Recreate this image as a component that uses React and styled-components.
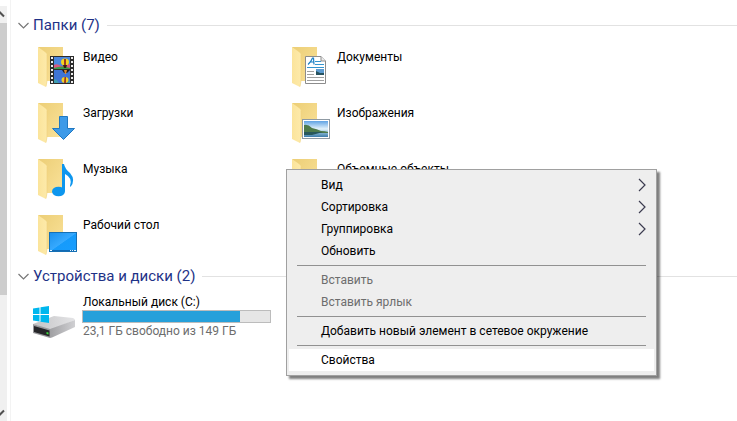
import { useState } from 'react';
import styled, { createGlobalStyle, css } from 'styled-components';

const GlobalStyle = createGlobalStyle`
  *, *::before, *::after {
    box-sizing: border-box;
  }

  body {
    margin: 0;
    background: #fff;
    color: #000;
    font-family: Roboto, "Noto Sans", sans-serif;
    font-size: 12px;
    line-height: 16px;
  }

  button {
    font: inherit;
    color: inherit;
    border: none;
    background: none;
    padding: 0;
  }
`;

const Page = styled.div`
  position: relative;
  display: flex;
  min-height: 100vh;
  overflow: hidden;
`;

const Scrollbar = styled.div`
  flex-shrink: 0;
  display: flex;
  flex-direction: column;
  width: 7px;
  margin-top: 6px;
  background: #f0f0f0;
`;

const ScrollButton = styled.button`
  display: flex;
  justify-content: flex-end;
  align-items: center;
  height: 17px;
  overflow: hidden;
`;

const Thumb = styled.div`
  flex: 5;
  background: #cdcdcd;
`;

const Track = styled.div`
  flex: 2;
`;

const Main = styled.main`
  flex: 1;
  min-width: 0;
  margin-left: 3px;
  padding: 12px 0 0 7px;
  border-left: 1px solid #f3f3f3;
`;

const GroupHeader = styled.div`
  display: flex;
  align-items: center;
  height: 27px;
`;

const GroupToggle = styled.button`
  display: flex;
  align-items: center;
  gap: 4px;
  color: #1e3287;
`;

const GroupTitle = styled.h2`
  margin: 0;
  font-size: 15px;
  line-height: 19px;
  font-weight: 400;
`;

const GroupLine = styled.div`
  flex: 1;
  height: 1px;
  margin-left: 7px;
  background: #e2e2e2;
`;

const FolderGrid = styled.div`
  display: grid;
  grid-template-columns: repeat(auto-fill, 254px);
  grid-auto-rows: 56px;
  max-width: 600px;
  padding-left: 14px;
`;

const Tile = styled.div`
  display: flex;
  align-items: flex-start;
  gap: 2px;
  padding: 4px 0;
`;

const TileIcon = styled.svg`
  flex-shrink: 0;
  width: 48px;
  height: 48px;
`;

const TileName = styled.div`
  padding: 6px 1px 0;
`;

const DriveInfo = styled.div`
  width: 189px;
`;

const DriveText = styled.div`
  padding-left: 1px;
  white-space: nowrap;
  color: ${(props) => (props.$muted ? '#6d6d6d' : '#000')};
`;

const Capacity = styled.div`
  height: 13px;
  border: 1px solid #bcbcbc;
  background: #e6e6e6;
`;

const CapacityUsed = styled.div`
  height: 100%;
  background: #26a0da;
`;

const Menu = styled.div`
  position: absolute;
  top: 169px;
  left: 286px;
  width: 371px;
  padding: 4px 2px;
  border: 1px solid #a0a0a0;
  background: #eee;
  box-shadow: 3px 3px 2px rgba(0, 0, 0, 0.5);
`;

const MenuItem = styled.button`
  display: flex;
  justify-content: space-between;
  align-items: center;
  width: 100%;
  height: 22px;
  padding: 0 8px 0 32px;
  text-align: left;

  ${(props) =>
    props.$active &&
    css`
      background: #fff;
    `}

  &:disabled {
    color: #6d6d6d;
  }
`;

const Separator = styled.hr`
  height: 1px;
  margin: 3px 8px;
  border: none;
  background: #919191;
`;

function FolderBase() {
  return (
    <>
      <defs>
        <linearGradient id="folderBack" x1="0" y1="0" x2="1" y2="1">
          <stop offset="0" stopColor="#ecce76" />
          <stop offset="1" stopColor="#fae29a" />
        </linearGradient>
        <linearGradient id="folderFlap" x1="0" y1="0" x2="1" y2="0">
          <stop offset="0" stopColor="#fbe49b" />
          <stop offset="1" stopColor="#fdeaaa" />
        </linearGradient>
      </defs>
      <path d="M6 4H31V38H14Z" fill="url(#folderBack)" />
      <path d="M14 38H19V40L14 44Z" fill="#fff" />
      <path d="M6 4L13 9Q15 10 15 13V38L14 44L6 40Z" fill="url(#folderFlap)" />
      <path d="M15 12V38L14 43.5" fill="none" stroke="#f0d27c" strokeWidth="0.6" />
    </>
  );
}

const overlays = {
  video: (
    <>
      <rect x="18" y="13" width="24" height="28" fill="#2c2c2c" />
      <rect x="22" y="14" width="16" height="12" fill="#4a86dd" />
      <path d="M22 22Q25 20 29 23L38 21V26H22Z" fill="#d8567f" />
      <path d="M22 25Q30 22 38 25V26H22Z" fill="#3a9b4c" />
      <ellipse cx="33" cy="19" rx="4" ry="3.500" fill="#f6d21c" />
      <path d="M32 16H34V22H32Z" fill="#9a3b23" />
      <path d="M31 22H35L34 25H32Z" fill="#33210f" />
      <rect x="22" y="27" width="16" height="13" fill="#3f74d6" />
      <path d="M30 27H38L35 30H32Z" fill="#231a1c" />
      <path d="M32 27H35L34 31H33Z" fill="#dc8a2e" />
      <ellipse cx="33" cy="37" rx="3.500" ry="3" fill="#f4cf24" />
      <path d="M32.500 34H34V40H32Z" fill="#9a3b23" />
      <path d="M22 36Q25 36 27 40H22ZM35 40Q37 37 38 38V40Z" fill="#3f9db0" />
      {[14, 18, 22, 26, 30, 34, 38].map((y) => (
        <g key={y} fill="#eee">
          <rect x="19" y={y} width="2" height="2" />
          <rect x="39" y={y} width="2" height="2" />
        </g>
      ))}
    </>
  ),
  documents: (
    <>
      <path d="M19.500 13.500H35L39.500 18V40.500H19.500Z" fill="#fff" stroke="#8c8c8c" />
      <path d="M35 13.500V18H39.500" fill="#ececec" stroke="#8c8c8c" />
      <path
        d="M22 21.500Q25 19 26.500 15H27.500L28 21.500M24.500 19H28"
        fill="none"
        stroke="#1c80c5"
        strokeWidth="1.200"
      />
      <path d="M29 18.500H35M29 21.500H38M21 24.500H38" stroke="#3595cf" />
      <path d="M21 28.500H28M21 31.500H28M21 34.500H38M21 37.500H38" stroke="#a0a0a0" />
      <rect x="30" y="26" width="8" height="6" fill="#5d9bd0" />
      <path d="M30 28L34 30H38V32H30Z" fill="#27535f" />
    </>
  ),
  downloads: (
    <path
      d="M27.500 17.500H35.500V29.500H42.500L31.500 40.500L20.500 29.500H27.500Z"
      fill="#3d9ae8"
      stroke="#1f78c2"
    />
  ),
  images: (
    <>
      <defs>
        <linearGradient id="photoSky" x1="0" y1="0" x2="0" y2="1">
          <stop offset="0" stopColor="#5fa3e4" />
          <stop offset="0.500" stopColor="#e4f3fb" />
          <stop offset="0.700" stopColor="#8fbdd9" />
          <stop offset="1" stopColor="#3c7ba8" />
        </linearGradient>
      </defs>
      <rect x="16.500" y="20.500" width="27" height="19" fill="#fff" stroke="#8f9aa3" />
      <rect x="18" y="22" width="24" height="16" fill="url(#photoSky)" />
      <path d="M18 26Q22 25 26 29Q31 30 35 32Q39 32 42 33V34H18Z" fill="#4d7a4b" />
      <path d="M18 33H37Q30 35 26 36H18Z" fill="#28585b" />
    </>
  ),
  music: (
    <>
      <ellipse cx="26.500" cy="36.500" rx="6.500" ry="4.800" fill="#0d96ee" />
      <path
        d="M30 9H32Q33 14 38 18Q44 25 38.500 32L38 31Q41 23 33 19V36H30Z"
        fill="#0d96ee"
      />
    </>
  ),
  desktop: (
    <>
      <defs>
        <linearGradient id="screen" x1="0" y1="0" x2="1" y2="1">
          <stop offset="0" stopColor="#1a8fea" />
          <stop offset="0.500" stopColor="#37aaff" />
          <stop offset="0.520" stopColor="#169bfb" />
          <stop offset="1" stopColor="#179dff" />
        </linearGradient>
      </defs>
      <rect x="17.500" y="21.500" width="27" height="19" fill="url(#screen)" stroke="#1570b5" />
      <path d="M18 39.500H44" stroke="#126ab4" />
      <path d="M18 39.500H20M38 39.500H39M40 39.500H41M42 39.500H44" stroke="#e5f5ff" />
    </>
  ),
};

function FolderIcon({ type }) {
  return (
    <TileIcon viewBox="0 0 48 48" aria-hidden="true">
      <FolderBase />
      {overlays[type]}
    </TileIcon>
  );
}

function DriveIcon() {
  return (
    <TileIcon viewBox="0 0 48 48" aria-hidden="true">
      <defs>
        <linearGradient id="driveTop" x1="0" y1="0" x2="1" y2="0">
          <stop offset="0" stopColor="#c4c4c6" />
          <stop offset="1" stopColor="#e4e4e6" />
        </linearGradient>
        <linearGradient id="driveSide" x1="0" y1="0" x2="1" y2="0">
          <stop offset="0" stopColor="#a0a0a3" />
          <stop offset="1" stopColor="#d0d0d3" />
        </linearGradient>
      </defs>
      <path d="M1 30L22 22L41 24Q43 25 43 26L18 36Z" fill="url(#driveTop)" />
      <path d="M43 26V33L20 43.500L18 44V35Z" fill="url(#driveSide)" />
      <path d="M1 30L18 35V44L1 39Z" fill="#98989b" />
      <path d="M2 32L17.500 36.500V42.500L2 38Z" fill="#262629" />
      <path d="M14.500 38L16.500 38.500V40.500L14.500 40Z" fill="#3ddc3d" />
      <path
        d="M1 14.500L7.500 13.500V20H1ZM8.500 13.300L17 12V20H8.500ZM1 21H7.500V27.500L1 26.500ZM8.500 21H17V29L8.500 27.700Z"
        fill="#00b7ee"
      />
    </TileIcon>
  );
}

const folders = [
  { name: 'Видео', type: 'video' },
  { name: 'Документы', type: 'documents' },
  { name: 'Загрузки', type: 'downloads' },
  { name: 'Изображения', type: 'images' },
  { name: 'Музыка', type: 'music' },
  { name: 'Объемные объекты', type: 'objects' },
  { name: 'Рабочий стол', type: 'desktop' },
];

const menuGroups = [
  [
    { label: 'Вид', submenu: true },
    { label: 'Сортировка', submenu: true },
    { label: 'Группировка', submenu: true },
    { label: 'Обновить' },
  ],
  [
    { label: 'Вставить', disabled: true },
    { label: 'Вставить ярлык', disabled: true },
  ],
  [{ label: 'Добавить новый элемент в сетевое окружение' }],
  [{ label: 'Свойства', active: true }],
];

function Group({ title, children }) {
  const [open, setOpen] = useState(true);

  return (
    <section>
      <GroupHeader>
        <GroupToggle aria-expanded={open} onClick={() => setOpen(!open)}>
          <svg width="11" height="8" viewBox="0 0 11 8" aria-hidden="true">
            <path d="M0.500 1L5.500 6L10.500 1" fill="none" stroke="#777" strokeWidth="1.200" />
          </svg>
          <GroupTitle>{title}</GroupTitle>
        </GroupToggle>
        <GroupLine />
      </GroupHeader>
      {open && children}
    </section>
  );
}

function ContextMenu() {
  return (
    <Menu role="menu">
      {menuGroups.map((items, index) => (
        <div key={items[0].label}>
          {index > 0 && <Separator />}
          {items.map((item) => (
            <MenuItem
              key={item.label}
              role="menuitem"
              disabled={item.disabled}
              $active={item.active}
            >
              {item.label}
              {item.submenu && (
                <svg width="8" height="14" viewBox="0 0 8 14" aria-hidden="true">
                  <path d="M1 1L7 7L1 13" fill="none" stroke="#3c3c50" strokeWidth="1.200" />
                </svg>
              )}
            </MenuItem>
          ))}
        </div>
      ))}
    </Menu>
  );
}

function App() {
  const used = 84;

  return (
    <>
      <GlobalStyle />
      <Page>
        <Scrollbar>
          <ScrollButton aria-label="Вверх">
            <svg width="7" height="7" viewBox="0 0 7 7">
              <path d="M-4 5.500L0 1.500L4 5.500" fill="none" stroke="#505050" strokeWidth="2" />
            </svg>
          </ScrollButton>
          <Thumb />
          <Track />
          <ScrollButton aria-label="Вниз">
            <svg width="7" height="7" viewBox="0 0 7 7">
              <path d="M-4 1.500L0 5.500L4 1.500" fill="none" stroke="#505050" strokeWidth="2" />
            </svg>
          </ScrollButton>
        </Scrollbar>
        <Main>
          <Group title="Папки (7)">
            <FolderGrid>
              {folders.map((folder) => (
                <Tile key={folder.name}>
                  <FolderIcon type={folder.type} />
                  <TileName>{folder.name}</TileName>
                </Tile>
              ))}
            </FolderGrid>
          </Group>
          <Group title="Устройства и диски (2)">
            <FolderGrid>
              <Tile>
                <DriveIcon />
                <DriveInfo>
                  <DriveText>Локальный диск (C:)</DriveText>
                  <Capacity>
                    <CapacityUsed style={{ width: `${used}%` }} />
                  </Capacity>
                  <DriveText $muted>23,1 ГБ свободно из 149 ГБ</DriveText>
                </DriveInfo>
              </Tile>
            </FolderGrid>
          </Group>
        </Main>
        <ContextMenu />
      </Page>
    </>
  );
}

export default App;
